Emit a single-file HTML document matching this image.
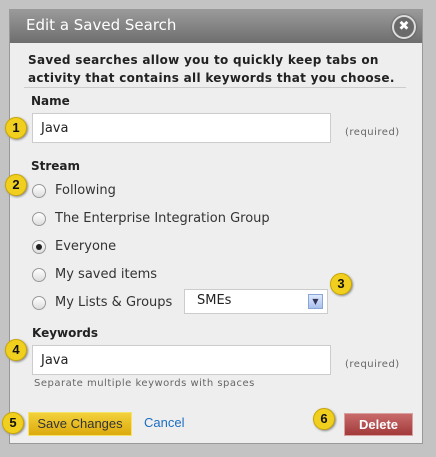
<!DOCTYPE html><html><head><style>
body{margin:0;width:436px;height:457px;background:#c3c3c3;position:relative;font-family:"DejaVu Sans","Liberation Sans",sans-serif;overflow:hidden}
.dlg{position:absolute;left:9px;top:9px;width:414px;height:435px;background:#eee;border:1px solid #999;box-sizing:border-box}
.hd{position:absolute;left:0;top:0;right:0;height:33px;background:linear-gradient(#9a9a9a,#6e6e6e);}
.t{position:absolute;color:#fff;font-size:15px;left:16px;top:6px}
.x{position:absolute;left:382px;top:5px;width:20px;height:20px;border-radius:50%;background:#6a6a6a;border:2px solid #ddd;color:#fff;font-size:13px;font-weight:bold;text-align:center;line-height:19px;box-shadow:0 0 2px #444}
.a{position:absolute;font-size:12px;color:#222}
.b{font-weight:bold}
.inp{position:absolute;left:32px;width:299px;height:30px;background:#fff;border:1px solid #ccc;box-sizing:border-box;font-size:13px;padding:7px 0 0 8px;color:#222}
.req{position:absolute;left:345px;font-size:10px;color:#666;letter-spacing:.5px}
.bd{position:absolute;width:20px;height:20px;border-radius:50%;background:#f1cf1f;border:1px solid #c9a600;box-shadow:1px 1px 2px #888;font:bold 13px "Liberation Sans",sans-serif;text-align:center;line-height:20px;color:#111}
.r{position:absolute;left:32px;width:12px;height:12px;border-radius:50%;border:1px solid #999;background:linear-gradient(#fff,#ddd)}
.rl{position:absolute;left:55px;font-size:13px;color:#333}
</style></head><body>
<div class="dlg"><div class="hd"><div class="t">Edit a Saved Search</div><div class="x">✖</div></div></div>
<div class="a b" style="left:28px;top:51px;line-height:18px;letter-spacing:.3px">Saved searches allow you to quickly keep tabs on<br>activity that contains all keywords that you choose.</div>
<div style="position:absolute;left:24px;top:87px;width:382px;height:1px;background:#ccc"></div>
<div class="a b" style="left:31px;top:94px;font-size:12px">Name</div>
<div class="inp" style="top:113px">Java</div>
<div class="req" style="top:127px">(required)</div>
<div class="bd" style="left:5px;top:117px">1</div>
<div class="a b" style="left:31px;top:159px">Stream</div>
<div class="bd" style="left:5px;top:174px">2</div>
<div class="r" style="top:184px"></div><div class="rl" style="top:183px">Following</div>
<div class="r" style="top:212px"></div><div class="rl" style="top:211px">The Enterprise Integration Group</div>
<div class="r" style="top:240px"><div style="position:absolute;left:3px;top:3px;width:6px;height:6px;border-radius:50%;background:#222"></div></div><div class="rl" style="top:239px">Everyone</div>
<div class="r" style="top:268px"></div><div class="rl" style="top:267px">My saved items</div>
<div class="r" style="top:296px"></div><div class="rl" style="top:295px">My Lists &amp; Groups</div>
<div style="position:absolute;left:184px;top:289px;width:144px;height:25px;background:#fff;border:1px solid #ccc;box-sizing:border-box"><span style="position:absolute;left:12px;top:3px;font-size:13px;color:#222">SMEs</span><div style="position:absolute;right:4px;top:4px;width:15px;height:15px;background:linear-gradient(#dde8fb,#a9c0ef);border:1px solid #8aa6d8;box-sizing:border-box;font-size:8px;text-align:center;line-height:14px;color:#335">▼</div></div>
<div class="bd" style="left:330px;top:273px">3</div>
<div class="a b" style="left:32px;top:326px">Keywords</div>
<div class="bd" style="left:5px;top:339px">4</div>
<div class="inp" style="top:345px">Java</div>
<div class="req" style="top:359px">(required)</div>
<div class="a" style="left:34px;top:378px;font-size:10px;color:#666;letter-spacing:.5px">Separate multiple keywords with spaces</div>
<div class="bd" style="left:2px;top:412px">5</div>
<div style="position:absolute;left:28px;top:412px;width:104px;height:24px;background:linear-gradient(#f3d13a,#dcaa0e);border:1px solid #f5e26a;box-sizing:border-box;font:13px 'Liberation Sans',sans-serif;text-align:center;line-height:22px;color:#333">Save Changes</div>
<div style="position:absolute;left:144px;top:415px;font:13px 'Liberation Sans',sans-serif;color:#1b6ec2">Cancel</div>
<div class="bd" style="left:313px;top:408px">6</div>
<div style="position:absolute;left:344px;top:413px;width:69px;height:23px;background:linear-gradient(#c86a6a,#a23a3a);border:1px solid #d8a0a0;box-sizing:border-box;font:bold 13px 'Liberation Sans',sans-serif;text-align:center;line-height:21px;color:#fff">Delete</div>
</body></html>
